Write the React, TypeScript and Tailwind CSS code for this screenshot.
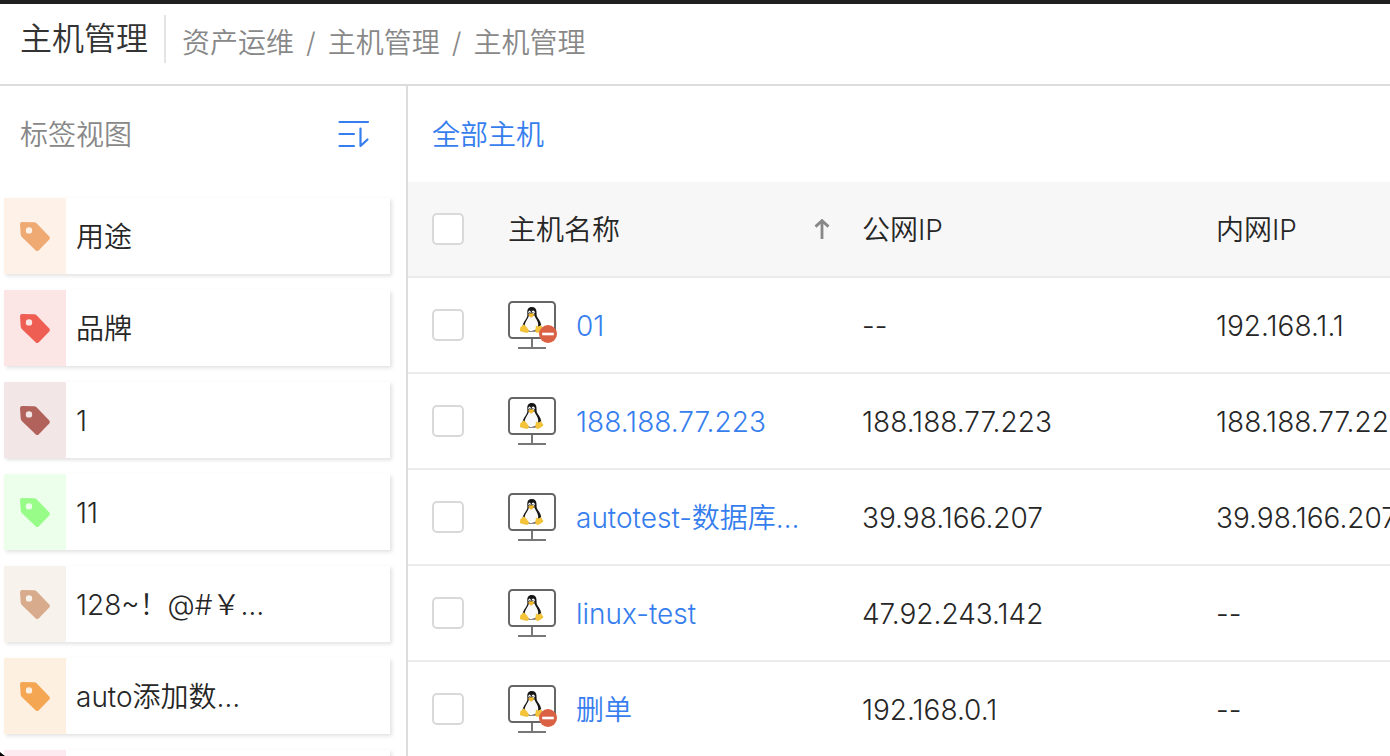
import React from 'react';

type Tag = { label: string; color: string; tint: string };
type Host = { name: string; publicIp: string; privateIp: string; stopped?: boolean };

const tags: Tag[] = [
  { label: '用途', color: 'text-[#efa972]', tint: 'bg-[#fdf1e8]' },
  { label: '品牌', color: 'text-[#ee5e52]', tint: 'bg-[#fbe6e5]' },
  { label: '1', color: 'text-[#b1625b]', tint: 'bg-[#f2e7e6]' },
  { label: '11', color: 'text-[#98fd88]', tint: 'bg-[#ecffeb]' },
  { label: '128~！@#￥…', color: 'text-[#d7ab8c]', tint: 'bg-[#f8f2ed]' },
  { label: 'auto添加数…', color: 'text-[#f4a653]', tint: 'bg-[#fef0e1]' },
  { label: '', color: 'text-[#f06a96]', tint: 'bg-[#fdeaf1]' },
];

const hosts: Host[] = [
  { name: '01', publicIp: '--', privateIp: '192.168.1.1', stopped: true },
  { name: '188.188.77.223', publicIp: '188.188.77.223', privateIp: '188.188.77.223' },
  { name: 'autotest-数据库…', publicIp: '39.98.166.207', privateIp: '39.98.166.207' },
  { name: 'linux-test', publicIp: '47.92.243.142', privateIp: '--' },
  { name: '删单', publicIp: '192.168.0.1', privateIp: '--', stopped: true },
];

function TagIcon() {
  return (
    <svg viewBox="0 0 30 30" className="size-[30px]" fill="currentColor" aria-hidden="true">
      <path
        fillRule="evenodd"
        d="M2.2 0.9 L14 1.2 Q15.6 1.3 16.8 2.4 L29.3 15.4 Q30.4 17 29.3 18.4 L18.6 29.4 Q17.2 30.5 15.8 29.4 L1.8 16 Q0.8 14.8 0.7 13.4 L0 3.2 Q0 0.9 2.2 0.9 Z M9 6.2 A3.2 3.2 0 1 0 9 12.6 A3.2 3.2 0 1 0 9 6.2 Z"
      />
    </svg>
  );
}

function SortListIcon() {
  return (
    <svg viewBox="0 0 32 28" className="h-7 w-8" fill="none" stroke="currentColor" strokeWidth="2.2" strokeLinecap="round" strokeLinejoin="round" aria-hidden="true">
      <path d="M1.5 2H30M1.5 14H16M1.5 26H16M22.5 8.5V26L29.5 19.5" />
    </svg>
  );
}

function SortArrow() {
  return (
    <svg viewBox="0 0 16 20" className="h-5 w-4" fill="none" stroke="currentColor" strokeWidth="2.8" aria-hidden="true">
      <path d="M8 20V1.5M1.5 7.6L8 1.6L14.5 7.6" />
    </svg>
  );
}

function HostIcon({ stopped }: { stopped?: boolean }) {
  return (
    <svg viewBox="0 0 48 48" className="size-12 shrink-0 overflow-visible" aria-hidden="true">
      <rect x="1" y="1" width="46" height="36" rx="3.5" fill="#fff" stroke="#666" strokeWidth="2" />
      <path d="M24 38V46M10 47H38" stroke="#777" strokeWidth="2" fill="none" />
      <path
        d="M23.8 6C20.6 6 19.2 8.2 19.3 11C19.4 14.6 19.7 15.6 17.8 18.2C15.8 21 14.4 23.4 14.5 26.4L20.5 30.4H27.5L33.2 26.6C33.6 22.8 31.9 19.6 29.7 16.8C28.3 14.8 28.6 13.4 28.5 10.8C28.4 7.8 26.8 6 23.8 6Z"
        fill="#151515"
      />
      <path
        d="M20.8 14.8C20.4 17.6 16.8 20.8 16.8 24.2C17 27.8 20.4 30 23.6 30C27.6 30 30.2 27.4 30.2 23.6C30.2 20 27.4 17.8 26.6 14.6Z"
        fill="#f9f9f9"
      />
      <ellipse cx="21.6" cy="11.2" rx="1.2" ry="1.6" fill="#fff" />
      <ellipse cx="25.2" cy="11.2" rx="1.5" ry="1.8" fill="#fff" />
      <circle cx="21.9" cy="11.6" r="0.6" fill="#111" />
      <circle cx="24.9" cy="11.6" r="0.6" fill="#111" />
      <path d="M20 13.8L23.1 12.2L26.6 13.6L23.2 16.6Z" fill="#f2bc2c" stroke="#d99a1d" strokeWidth="0.4" />
      <path
        d="M15.4 23.4C17 23.2 19.9 27.3 20.8 29.4C21.2 31.2 19.4 32.2 17.8 31.8L12.8 30.4C11.4 30 12.3 28.6 12.1 27.2C12 25.6 14 25.6 15.4 23.4Z"
        fill="#f3c43a"
      />
      <path
        d="M28 24.4C29.8 26 31.6 25.4 32.6 24C33.6 26 35.4 27 35.4 28.2C34.6 29.4 32.4 30.6 31.2 31.6C29.6 32.4 27.4 31.8 27.2 29.8Z"
        fill="#f3c43a"
      />
      {stopped && (
        <>
          <circle cx="40" cy="33" r="9" fill="#db6145" />
          <path d="M34.2 33H45.8" stroke="#fff" strokeWidth="2.6" />
        </>
      )}
    </svg>
  );
}

function Check({ label }: { label: string }) {
  return (
    <input
      type="checkbox"
      aria-label={label}
      className="block size-8 appearance-none rounded-[5px] border-2 border-[#d9d9d9] bg-white checked:bg-[#367eee]"
    />
  );
}

export default function App() {
  return (
    <div className="relative flex h-screen flex-col overflow-hidden border-t-4 border-[#202020] bg-white font-['Inter','Noto_Sans_CJK_SC',sans-serif] text-[28px] leading-10 font-[350] text-[#262626]">
      <header className="flex h-[82px] shrink-0 items-start border-b-2 border-[#dcdcdc] pt-[11px] pl-5">
        <h1 className="border-r-2 border-[#e4e4e4] pr-4 text-[32px] leading-[48px] font-[350] text-[#333]">主机管理</h1>
        <nav aria-label="面包屑" className="flex gap-3 pt-2 pl-4 text-[#888]">
          <a href="#assets">资产运维</a>
          <span>/</span>
          <a href="#hosts">主机管理</a>
          <span>/</span>
          <span>主机管理</span>
        </nav>
      </header>

      <div className="flex min-h-0 flex-1">
        <aside className="flex w-[408px] shrink-0 flex-col overflow-hidden border-r-2 border-[#dcdcdc]">
          <div className="flex h-24 shrink-0 items-center justify-between pr-9 pl-5">
            <h2 className="pt-0.5 text-[#888]">标签视图</h2>
            <button type="button" aria-label="排序" className="text-[#367eee]">
              <SortListIcon />
            </button>
          </div>
          <ul className="flex flex-col gap-4 pt-4 pr-4 pl-1">
            {tags.map((tag, i) => (
              <li key={i} className="flex h-[76px] shrink-0 bg-white shadow-[2px_2px_4px_rgba(0,0,0,0.12)]">
                <span className={`flex w-[62px] items-center justify-center ${tag.tint} ${tag.color}`}>
                  <TagIcon />
                </span>
                <span className="flex-1 self-center truncate pt-0.5 pl-2.5">{tag.label}</span>
              </li>
            ))}
          </ul>
        </aside>

        <main className="min-w-0 flex-1 overflow-hidden">
          <div className="flex h-24 items-center px-6">
            <a href="#all" className="pt-0.5 text-[#367eee]">全部主机</a>
          </div>
          <table className="w-full min-w-[1138px] table-fixed border-separate border-spacing-0 text-left [&_td]:border-b-2 [&_td]:border-[#ebebeb] [&_th]:border-b-2 [&_th]:border-[#ebebeb]">
            <colgroup>
              <col className="w-[76px]" />
              <col className="w-[354px]" />
              <col className="w-[354px]" />
              <col />
            </colgroup>
            <thead className="bg-[#f7f7f7]">
              <tr className="h-24">
                <th className="pl-6"><Check label="全选" /></th>
                <th className="pr-2 pl-6 font-[350]">
                  <span className="flex items-center justify-between">
                    <span className="pt-0.5">主机名称</span>
                    <button type="button" aria-label="按主机名称排序" className="text-[#888]">
                      <SortArrow />
                    </button>
                  </span>
                </th>
                <th className="px-6 pt-0.5 font-[350]">公网IP</th>
                <th className="px-6 pt-0.5 font-[350]">内网IP</th>
              </tr>
            </thead>
            <tbody>
              {hosts.map((host) => (
                <tr key={host.name} className="h-24">
                  <td className="pl-6"><Check label={host.name} /></td>
                  <td className="pl-6">
                    <a href="#host" className="flex items-center gap-5 whitespace-nowrap text-[#367eee]">
                      <HostIcon stopped={host.stopped} />
                      <span className="pt-0.5">{host.name}</span>
                    </a>
                  </td>
                  <td className="px-6 pt-0.5">{host.publicIp}</td>
                  <td className="pt-0.5 pl-6 whitespace-nowrap">{host.privateIp}</td>
                </tr>
              ))}
            </tbody>
          </table>
        </main>
      </div>

      <svg viewBox="0 0 6 4" className="absolute bottom-0 left-0 h-1 w-1.5" aria-hidden="true">
        <path d="M0 0Q2.5 2.4 5 4H0Z" fill="#000" />
      </svg>
    </div>
  );
}
